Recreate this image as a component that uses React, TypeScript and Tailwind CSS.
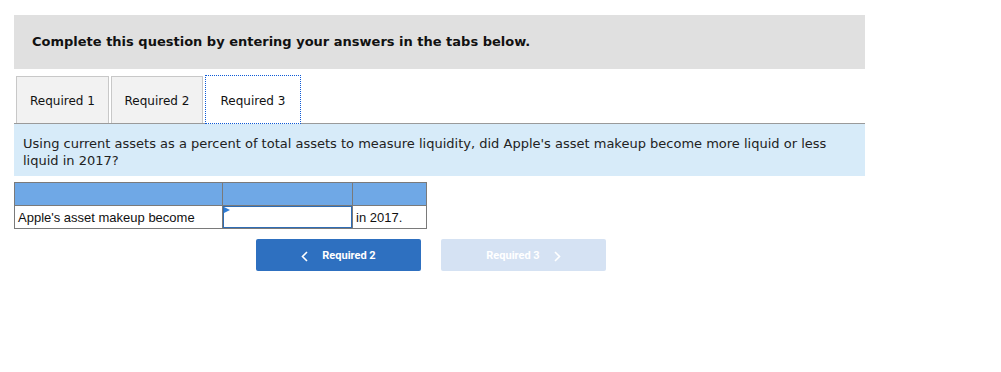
import React from 'react';

const verdana = { fontFamily: 'Verdana, "DejaVu Sans", sans-serif' };

const tabs = ['Required 1', 'Required 2', 'Required 3'];

export default function App() {
  return (
    <div className="w-[1001px] h-[372px] bg-white pt-[15px] pl-[14px]" style={verdana}>
      <div className="w-[851px]">
        <div className="h-[54px] bg-[#e0e0e0] flex items-center pl-[18px] text-[13px] font-bold text-[#111]">
          Complete this question by entering your answers in the tabs below.
        </div>

        <div className="flex gap-[2px] mt-[7px] pl-[2px] h-[47px] items-end">
          {tabs.map((t, i) =>
            i === 2 ? (
              <div
                key={t}
                className="w-[96px] h-[49px] pt-[2px] bg-white border border-dotted border-[#0d5ad6] flex items-center justify-center text-[12px] text-[#111] whitespace-nowrap -mb-px relative z-10"
              >
                {t}
              </div>
            ) : (
              <div
                key={t}
                className="h-[47px] pt-[2px] bg-[#f2f2f2] border border-[#c8c8c8] border-b-0 flex items-center justify-center text-[12px] text-[#111] whitespace-nowrap"
                style={{ width: i === 0 ? 93 : 92 }}
              >
                {t}
              </div>
            )
          )}
        </div>

        <div className="bg-[#d7ebf9] border-t border-[#9a9a9a] h-[53px] px-[9px] pt-[11px] text-[13px] leading-[17px] text-[#222]">
          Using current assets as a percent of total assets to measure liquidity, did Apple's asset makeup become more liquid or less liquid in 2017?
        </div>

        <table
          className="mt-[6px] border-collapse text-[13px] text-[#111]"
          style={{ fontFamily: '"Liberation Sans", Arial, sans-serif' }}
        >
          <tbody>
            <tr className="h-[23px] bg-[#6fa8e6]">
              <td className="w-[208px] border border-[#7a7a7a] p-0"></td>
              <td className="w-[130px] border border-[#7a7a7a] p-0"></td>
              <td className="w-[74px] border border-[#7a7a7a] p-0"></td>
            </tr>
            <tr className="h-[23px]">
              <td className="border border-[#7a7a7a] px-[3px] py-0 leading-none">Apple's asset makeup become</td>
              <td className="border border-[#7a7a7a] p-0">
                <div className="relative h-[22px] border border-[#2f6db5] bg-white">
                  <svg className="absolute left-0 top-0" width="6" height="6" viewBox="0 0 6 6">
                    <polygon points="0,0 6,3 0,6" fill="#2f7dd6" />
                  </svg>
                </div>
              </td>
              <td className="border border-[#7a7a7a] px-[3px] py-0 leading-none">in 2017.</td>
            </tr>
          </tbody>
        </table>

        <div
          className="flex gap-[20px] mt-[10px] ml-[242px]"
          style={{ fontFamily: 'Roboto, "Liberation Sans", sans-serif' }}
        >
          <div className="w-[165px] h-[32px] pt-[2px] rounded-[2px] bg-[#2e70c0] flex items-center justify-center gap-[14px] text-white text-[11px] font-bold">
            <svg width="7" height="11" viewBox="0 0 7 11">
              <polyline points="6,1 1.5,5.5 6,10" fill="none" stroke="white" strokeWidth="1.6" />
            </svg>
            <span>Required 2</span>
          </div>
          <div className="w-[165px] h-[32px] pt-[2px] rounded-[2px] bg-[#d5e2f3] flex items-center justify-center gap-[14px] text-white text-[11px] font-bold">
            <span>Required 3</span>
            <svg width="7" height="11" viewBox="0 0 7 11">
              <polyline points="1,1 5.5,5.5 1,10" fill="none" stroke="white" strokeWidth="1.6" />
            </svg>
          </div>
        </div>
      </div>
    </div>
  );
}
